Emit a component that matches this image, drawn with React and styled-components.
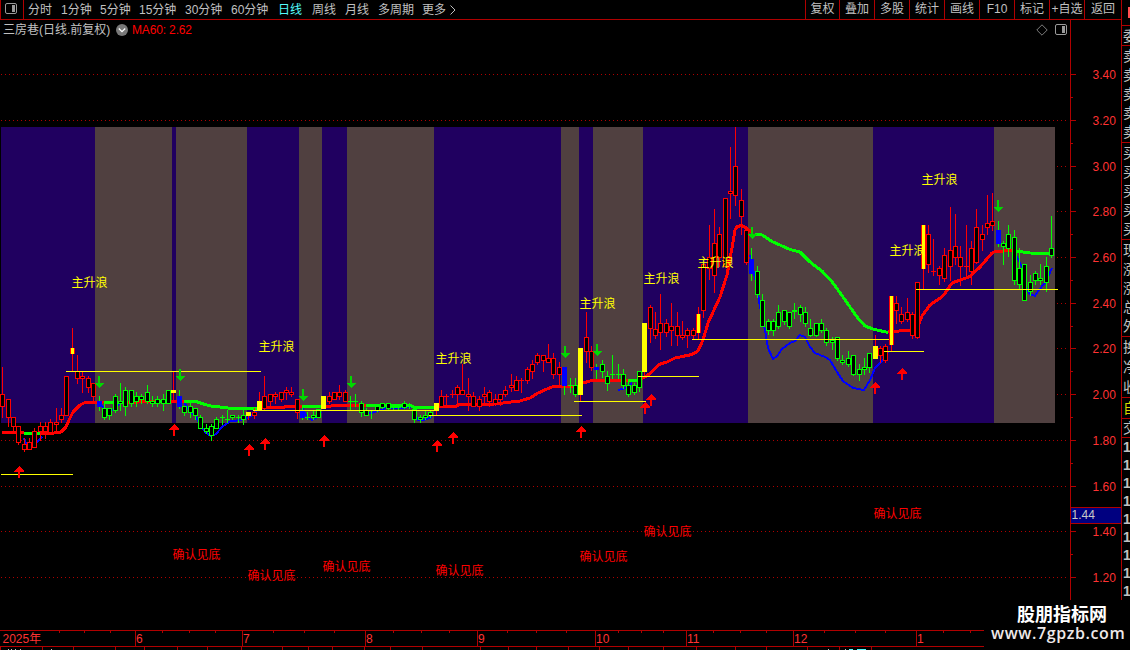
import React from "react";
import styled, { createGlobalStyle, css } from "styled-components";

const RED = "#b00000";

const periods = [
  ["分时", 33],
  ["1分钟", 39],
  ["5分钟", 39],
  ["15分钟", 46],
  ["30分钟", 46],
  ["60分钟", 47],
  ["日线", 34],
  ["周线", 33],
  ["月线", 33],
  ["多周期", 44],
  ["更多", 27],
];

const tools = ["复权", "叠加", "多股", "统计", "画线", "F10", "标记", "+自选", "返回"];

const prices = [
  ["3.40", 74],
  ["3.20", 120],
  ["3.00", 166],
  ["2.80", 211],
  ["2.60", 257],
  ["2.40", 303],
  ["2.20", 348],
  ["2.00", 394],
  ["1.80", 440],
  ["1.60", 486],
  ["1.40", 531],
  ["1.20", 577],
];

// background stripes: every edge switches between purple and brown
const bandEdges = [1, 95, 172, 176, 247, 299, 322, 347, 434, 561, 579, 593, 643, 748, 873, 994, 1055];

// high low top bottom kind
// r red, g green, y yellow, b blue, m red frame with yellow core
const candles = `367 417 394 406 r|399 426 399 417 r|417 431 417 426 r|426 444 426 442 r|438 451 444 449 r
438 449 442 449 r|428 447 431 447 r|422 440 426 431 r|422 438 426 431 r|419 432 422 432 r
408 431 422 424 r|408 422 415 419 r|376 415 376 415 r|328 371 348 353 m|355 383 371 378 r
371 392 376 378 r|376 392 378 387 r|383 401 383 396 r|396 410 401 406 b|403 419 408 417 g
408 419 408 415 g|394 412 396 410 g|383 410 401 403 g|387 415 390 406 g|390 406 390 403 g
392 406 396 401 g|394 403 396 399 g|385 403 392 401 g|396 406 401 403 g|396 406 399 403 g
394 410 399 403 g|390 403 390 403 g|371 399 390 392 y|390 408 396 406 b|406 415 406 412 g
403 417 406 412 g|408 419 408 415 g|415 428 417 428 g|424 433 428 431 g|424 440 426 435 g
417 428 419 428 g|415 424 417 417 g|410 422 419 419 g|415 419 415 417 g|415 422 417 417 g
410 424 415 419 g|412 419 412 415 y|408 418 412 415 r|392 409 401 409 y|376 409 396 408 r
394 405 394 401 r|392 403 394 396 r|392 401 392 399 r|387 399 390 392 r|387 396 392 394 r
399 418 399 412 r|408 419 411 417 b|412 419 417 417 g|411 419 415 417 g|409 417 409 417 g
396 408 396 408 y|392 403 396 401 r|392 399 392 399 r|385 399 392 396 r|390 401 392 401 r
396 409 401 401 g|394 406 401 401 g|401 416 403 412 g|408 415 410 415 g|410 418 410 410 g
406 411 406 410 g|403 408 403 407 g|403 409 403 408 g|406 409 407 407 g|405 409 407 407 g
401 408 403 407 g|403 408 406 406 g|408 422 409 419 g|415 422 417 419 g|410 419 415 417 g
410 417 412 415 g|403 414 403 410 y|390 406 396 406 r|394 405 396 396 r|390 397 394 394 r
385 403 387 394 r|364 394 390 394 r|378 410 394 396 r|392 406 396 406 r|396 410 399 406 r
387 405 394 396 r|390 406 392 401 r|394 405 399 403 r|394 405 394 399 r|386 396 390 394 r
374 391 385 387 r|376 390 380 390 r|378 392 380 380 r|367 383 369 380 r|360 378 364 371 r
353 364 355 362 r|355 371 355 360 r|344 362 358 362 r|353 378 358 374 r|362 385 367 374 r
367 394 367 385 b|378 392 385 385 g|378 396 385 394 g|348 400 348 394 y|312 362 337 351 r
346 370 351 367 r|364 378 367 369 b|360 377 364 371 g|371 390 376 383 g|355 378 374 374 g
364 378 374 374 g|369 388 374 385 g|382 396 385 394 g|383 394 385 392 g|371 391 371 387 g
323 377 323 371 y|305 342 307 328 r|312 338 329 335 r|294 349 323 332 r|319 336 323 332 r
303 345 326 330 r|312 345 326 335 r|321 339 335 337 r|328 347 330 335 r|328 338 330 335 r
307 338 314 332 m|264 317 264 310 r|225 279 257 268 r|209 292 243 275 r|227 266 234 257 r
198 266 198 266 r|147 218 191 193 r|127 205 166 195 r|189 234 200 216 r|226 264 230 262 r
248 280 259 273 b|266 297 271 294 g|294 326 300 326 g|319 334 321 330 g|319 335 321 330 g
305 328 312 326 g|310 324 310 321 g|312 328 312 326 g|303 318 310 311 g|305 321 307 314 g
307 326 312 323 g|319 336 328 335 g|323 336 323 335 g|319 332 323 330 g|328 345 330 342 g
337 349 340 342 g|337 360 337 358 g|355 364 360 362 g|351 366 358 364 g|355 375 355 374 g
364 380 369 374 g|358 374 367 369 g|353 372 353 367 g|335 358 346 358 y|346 362 348 355 r
344 362 346 360 r|296 350 296 344 m|296 323 303 310 r|307 323 314 321 r|298 321 312 319 r
312 338 314 335 r|282 338 282 337 r|225 289 225 268 m|225 272 234 264 r|239 275 271 271 r
266 284 268 275 r|248 281 255 278 r|207 280 250 266 r|214 264 246 257 r|246 285 257 266 r
225 275 266 266 r|241 284 248 271 r|209 263 227 262 r|225 250 234 239 r|195 234 223 227 r
193 230 221 225 r|221 246 230 243 b|241 264 243 246 g|225 256 234 248 g|230 284 237 280 g
248 288 268 284 g|264 300 264 300 g|275 295 282 291 g|271 284 273 280 g|264 284 278 280 g
257 291 266 282 g|216 257 248 255 g`
  .split(/[|\n]/)
  .map((row) => {
    const [high, low, top, bottom, kind] = row.split(" ");
    return { high: +high, low: +low, top: +top, bottom: +bottom, kind };
  });

const trend = [
  ["red", "2,432.5 24,432.5"],
  ["lime", "24,433 40,433"],
  ["red", "40,433.5 54,433 61,432 66,427 69,420 73,412 80,405 85,402.5 104,402"],
  ["lime", "104,402.5 117,402.5"],
  ["red", "117,402.5 160,401.5"],
  ["lime", "160,401.5 168,401.5"],
  ["red", "168,401.5 184,401.5"],
  ["lime", "184,401.5 196,401.5 205,404.5 211,406 220,407 232,408.5 258,408.5"],
  ["red", "258,407.5 284,407.5 285,406.5 302,406.5"],
  ["lime", "302,406.5 324,406.5"],
  ["red", "324,406.5 338,405.5 366,406"],
  ["lime", "366,405.5 410,405.5 415,407.5 436,407"],
  ["red", "436,406.5 455,406.5 460,404.5 490,404.5 507,402.5 520,401 530,398 538,393 547,389 552,387 563,386 578,386 583,383 590,381 600,380.5 628,380.5"],
  ["lime", "628,380.5 638,380.5"],
  ["red", "638,380.5 643,378 647,376 660,364 667,362 675,358 692,354.5 698,351 703,340 708,323 720,297 727,275 732,248 735,230 737,226.5 742,225.5 752,232"],
  ["lime", "755,234 762,235 773,242 790,249.5 800,252 810,262 822,271 833,283 843,297 857,317 865,326 873,329 888,332.5"],
  ["red", "888,332 910,330 917,329 922,316 930,305 943,296 952,283 970,276.5 980,267 992,253 995,251.5 1013,250.5"],
  ["lime", "1013,250.5 1030,253 1050,253.5"],
];

const blueLines = [
  "24,438 26,444 29,447 35,444 42,437",
  "98,402 104,408 109,411 115,409 120,403",
  "179,400 184,402 190,412 195,415 200,424 205,432 211,436 216,434 222,427 230,421.5 240,420 248,418 257,411",
  "302,407 307,417 312,420 318,417 321,412",
  "366,412 372,413 377,411 387,408 400,408 412,407",
  "412,410 418,420 423,420 432,417",
  "618,390 626,388 632,383",
  "750,255 757,287 760,307 765,330 768,348 773,359 777,356 782,349 790,343 795,341 800,335 805,337 810,347 815,353 825,357 830,360 837,372 843,381 853,388 864,390 870,380 875,368 883,360 888,352",
  "1016,255 1022,267 1027,290 1030,294 1035,296 1038,291 1045,283 1052,268",
];

const supports = [
  [66, 261, 371],
  [1, 73, 474],
  [253, 434, 410],
  [429, 582, 415],
  [574, 646, 401],
  [638, 699, 376],
  [692, 889, 339],
  [884, 924, 351],
  [916, 1058, 289],
];

const downArrows = [[98, 376], [179, 369], [302, 389], [350, 376], [564, 346], [596, 344], [751, 227], [997, 200]];
const upArrows = [
  [18, 466], [173, 424], [248, 444], [264, 438], [323, 435], [436, 440],
  [452, 432], [580, 426], [650, 394], [644, 402], [874, 382], [901, 368],
];

const waveTags = [[72, 282], [259, 346], [436, 358], [580, 303], [644, 278], [698, 262], [890, 250], [922, 179]];
const bottomTags = [[173, 554], [248, 575], [323, 566], [436, 570], [580, 556], [644, 531], [874, 513]];

const months = [["6", 135], ["7", 242], ["8", 365], ["9", 477], ["10", 595], ["11", 686], ["12", 793], ["1", 916]];
const weekTicks = [
  59, 84, 110, 162, 189, 215, 273, 304, 334, 393, 421, 449, 507, 536, 566,
  618, 641, 663, 713, 740, 766, 824, 855, 885, 943, 970,
];
const tabTicks = [
  0, 42, 73, 115, 144, 177, 207, 241, 282, 308, 332, 364, 390, 422, 480,
  508, 536, 568, 599, 628, 663, 696, 735, 766, 807, 839, 871,
];

const quoteGroups = [
  { rows: ["委"], height: 20 },
  { rows: ["卖", "卖", "卖", "卖", "卖"], height: 97 },
  { rows: ["买", "买", "买", "买", "买"], height: 97 },
  { rows: ["现", "涨", "涨", "总", "外"], height: 97 },
  { rows: ["换", "净", "收"], height: 61 },
  { rows: ["自"], height: 21, color: "#d8d800" },
  { rows: ["交"], height: 19 },
  { rows: ["1", "1", "1", "1", "1", "1", "1", "1", "1"], height: 163, bold: true },
];

const candleX = (i) => Math.round(2.2 + 5.352 * i);

const Candle = ({ i, high, low, top, bottom, kind }) => {
  const x = candleX(i);
  const wick = kind === "g" || kind === "b" ? "#00ff00" : "#ff0000";
  const h = bottom - top + 1;
  const fill = { r: "#ff0000", g: "#00ff00", y: "#ffff00", b: "#0000ff", m: "#ff0000" }[kind];
  return (
    <g>
      <rect x={x} y={high} width="1" height={low - high + 1} fill={wick} />
      <rect x={x - 2} y={top} width="5" height={h} fill={fill} />
      {(kind === "r" || kind === "g") && h > 2 && (
        <rect x={x - 1} y={top + 1} width="3" height={h - 2} fill="#000" />
      )}
      {kind === "m" && <rect x={x - 1} y={top} width="3" height={h} fill="#ffff00" />}
    </g>
  );
};

const PanelIcon = () => (
  <svg width="13" height="12" viewBox="0 0 13 12">
    <rect x="0.5" y="0.5" width="11" height="10" rx="1.5" fill="none" stroke="#9a9a9a" />
    <rect x="7" y="2" width="3" height="7" fill="#9a9a9a" />
  </svg>
);

const Chart = () => (
  <Plot viewBox="0 39 1070 591" width="1070" height="591">
    <g shapeRendering="crispEdges">
      {bandEdges.slice(0, -1).map((x, i) => (
        <rect key={x} x={x} y="127" width={bandEdges[i + 1] - x} height="296" fill={i % 2 ? "#504040" : "#200060"} />
      ))}
      {prices.map(([label, y]) =>
        y > 127 && y < 423 ? (
          <line key={label} x1="1057" x2="1068" y1={y + 0.5} y2={y + 0.5} stroke={RED} strokeDasharray="1 3" />
        ) : (
          <line key={label} x1="1" x2="1068" y1={y + 0.5} y2={y + 0.5} stroke={RED} strokeDasharray="1 3" />
        )
      )}
      {blueLines.map((points) => (
        <polyline key={points} points={points} fill="none" stroke="#0000ff" strokeWidth="2" />
      ))}
      {trend.map(([color, points]) => (
        <polyline key={points} points={points} fill="none" stroke={color} strokeWidth="3" strokeLinejoin="round" />
      ))}
      {candles.map((c, i) => (
        <Candle key={i} i={i} {...c} />
      ))}
      {/* the steep rally is drawn over its candles */}
      <polyline
        points="708,323 720,297 727,275 732,248 735,230 737,226.5 742,225.5 746,228"
        fill="none"
        stroke="red"
        strokeWidth="3"
      />
      {supports.map(([x1, x2, y]) => (
        <rect key={y} x={x1} y={y} width={x2 - x1} height="1" fill="#ffff00" />
      ))}
      {downArrows.map(([x, y]) => (
        <path key={x} d={`M${x} ${y}h2v7h4l-5 5l-5 -5h4z`} fill="#00d800" />
      ))}
      {upArrows.map(([x, y]) => (
        <path key={x} d={`M${x + 1} ${y}l5 5v1h-4v6h-2v-6h-4v-1z`} fill="#ff0000" />
      ))}
    </g>
    {waveTags.map(([x, y]) => (
      <Tag key={x} x={x - 0.5} y={y + 5} fill="#ffff00">主升浪</Tag>
    ))}
    {bottomTags.map(([x, y]) => (
      <Tag key={x} x={x - 0.5} y={y + 5} fill="#ff0000">确认见底</Tag>
    ))}
  </Plot>
);

const PriceAxis = () => (
  <Plot viewBox="1070 20 51 610" width="51" height="610">
    <g shapeRendering="crispEdges" fill={RED}>
      <rect x="1070" y="20" width="1" height="610" />
      {prices.map(([label, y]) => (
        <g key={label}>
          <rect x="1071" y={y} width="5" height="1" />
          <rect x="1071" y={y + 23} width="2" height="1" />
        </g>
      ))}
    </g>
    {prices.map(([label, y]) => (
      <Tag key={label} x="1092.5" y={y + 5} fill="#ff3232">{label}</Tag>
    ))}
    <rect x="1071" y="507" width="50" height="17" fill={RED} />
    <rect x="1071" y="508" width="50" height="15" fill="#000080" />
    <Tag x="1071.5" y="519" fill="#c8c8c8">1.44</Tag>
  </Plot>
);

const Timeline = () => (
  <Plot viewBox="0 630 1121 20" width="1121" height="20">
    <g shapeRendering="crispEdges" fill={RED}>
      <rect x="0" y="630" width="1121" height="1" />
      <rect x="0" y="646" width="1121" height="1" />
      {months.map(([m, x]) => (
        <rect key={m} x={x} y="630" width="1" height="16" />
      ))}
      {weekTicks.map((x) => (
        <rect key={x} x={x} y="631" width="1" height="2" />
      ))}
      {tabTicks.map((x) => (
        <rect key={x} x={x} y="647" width="1" height="3" />
      ))}
      <g fill="#c0c0c0">
        {[8, 11, 15, 20, 51, 828, 845].map((x) => (
          <rect key={x} x={x} y="649" width="1" height="1" />
        ))}
      </g>
      <path d="M849 649h4v1h-4zM857 649h9v1h-9z" fill="#54fcfc" />
    </g>
    <Tag x="2.5" y="643" fill="#ff3232">2025年</Tag>
    {months.map(([m, x]) => (
      <Tag key={m} x={x + 1} y="643" fill="#ff3232">{m}</Tag>
    ))}
  </Plot>
);

const App = () => {
  return (
    <Screen>
      <GlobalStyle />
      <Main>
        <Toolbar>
          <PanelToggle>
            <PanelIcon />
          </PanelToggle>
          <Periods>
            {periods.map(([label, width]) => (
              <Period key={label} $width={width} $active={label === "日线"}>
                {label}
              </Period>
            ))}
            <svg width="8" height="10" viewBox="0 0 8 10">
              <path d="M1.5 0.5L6 5L1.5 9.5" fill="none" stroke="#c0c0c0" />
            </svg>
          </Periods>
          {tools.map((label, i) => (
            <Tool key={label} $width={i === 0 ? 34 : i === 8 ? 37 : 35}>{label}</Tool>
          ))}
        </Toolbar>
        <Body>
          <ChartColumn>
            <TitleBar>
              <StockName>三房巷(日线.前复权)</StockName>
              <svg width="12" height="12" viewBox="0 0 12 12">
                <circle cx="6" cy="6" r="6" fill="#787878" />
                <path d="M2.8 4.5L6 7.7L9.2 4.5" fill="none" stroke="#fff" strokeWidth="1.3" />
              </svg>
              <MaValue>MA60: 2.62</MaValue>
              <svg width="12" height="12" viewBox="0 0 12 12">
                <path d="M6 0.8L11.2 6L6 11.2L0.8 6Z" fill="none" stroke="#8a8a8a" strokeWidth="0.9" />
              </svg>
              <PanelIcon />
            </TitleBar>
            <Chart />
          </ChartColumn>
          <PriceAxis />
        </Body>
        <Timeline />
      </Main>
      <Quotes>
        <QuoteHead>
          <QuoteMark />
        </QuoteHead>
        {quoteGroups.map((group, i) => (
          <QuoteGroup key={i} $height={group.height} $color={group.color} $bold={group.bold}>
            {group.rows.map((text, j) => (
              <span key={j}>{text}</span>
            ))}
          </QuoteGroup>
        ))}
      </Quotes>
      <Watermark>
        <SiteName>股朋指标网</SiteName>
        <SiteUrl>www.7gpzb.com</SiteUrl>
      </Watermark>
    </Screen>
  );
};

const GlobalStyle = createGlobalStyle`
  body {
    margin: 0;
    background: #000;
    overflow: hidden;
  }
  * {
    box-sizing: border-box;
  }
`;

const font = css`
  font-family: "Liberation Sans", "Noto Sans CJK SC", sans-serif;
  font-size: 12px;
`;

const Screen = styled.div`
  ${font}
  position: relative;
  display: flex;
  width: 1130px;
  height: 650px;
  overflow: hidden;
  background: #000;
  color: #c0c0c0;
  line-height: 18px;
  white-space: nowrap;
`;

const Main = styled.div`
  display: flex;
  flex-direction: column;
  width: 1121px;
  flex-shrink: 0;
`;

const Toolbar = styled.div`
  display: flex;
  height: 20px;
  border-bottom: 1px solid ${RED};
`;

const PanelToggle = styled.div`
  width: 24px;
  padding: 3px 0 0 4px;
  line-height: 0;
  border-left: 1px solid ${RED};
  border-right: 1px solid ${RED};
`;

const Periods = styled.div`
  display: flex;
  flex: 1;
  align-items: center;
  padding-left: 4px;
`;

const Period = styled.div`
  width: ${(p) => p.$width}px;
  color: ${(p) => (p.$active ? "#54fcfc" : "#c0c0c0")};
`;

const Tool = styled.div`
  width: ${(p) => p.$width}px;
  line-height: 19px;
  text-align: center;
  border-left: 1px solid ${RED};
`;

const Body = styled.div`
  display: flex;
  height: 610px;
`;

const ChartColumn = styled.div`
  width: 1070px;
`;

const TitleBar = styled.div`
  display: flex;
  align-items: center;
  height: 19px;
  padding: 0 2px 0 3px;
`;

const StockName = styled.div`
  width: 113px;
`;

const MaValue = styled.div`
  flex: 1;
  margin-left: 4px;
  color: #ff0000;
  letter-spacing: -0.15px;

  & + svg {
    margin-right: 7px;
  }
`;

const Plot = styled.svg`
  display: block;
  flex-shrink: 0;
`;

const Tag = styled.text`
  ${font}
`;

const Quotes = styled.div`
  width: 9px;
  overflow: hidden;
  border-left: 1px solid ${RED};
`;

const QuoteHead = styled.div`
  display: flex;
  justify-content: flex-end;
  height: 26px;
  padding-top: 7px;
  border-bottom: 1px solid ${RED};
`;

const QuoteMark = styled.div`
  width: 2px;
  height: 11px;
  background: #ff5050;
`;

const QuoteGroup = styled.div`
  display: flex;
  flex-direction: column;
  justify-content: space-around;
  height: ${(p) => p.$height}px;
  padding-left: 1px;
  border-bottom: 1px solid ${RED};
  color: ${(p) => p.$color || "#c0c0c0"};
  font-size: 14px;
  font-weight: ${(p) => (p.$bold ? 700 : 400)};
`;

const Watermark = styled.div`
  position: absolute;
  right: 0;
  bottom: 0;
  width: 146px;
  height: 50px;
  background: #000;
  color: #fff;
`;

const SiteName = styled.div`
  padding: 3px 0 0 33px;
  font-family: "Noto Sans CJK SC", sans-serif;
  font-size: 18px;
  font-weight: 700;
  line-height: 20px;
`;

const SiteUrl = styled.div`
  padding-left: 7px;
  font-family: "Open Sans", sans-serif;
  font-size: 16px;
  font-weight: 600;
  letter-spacing: 0.6px;
  line-height: 20px;
  color: #eee8e8;
`;

export default App;
